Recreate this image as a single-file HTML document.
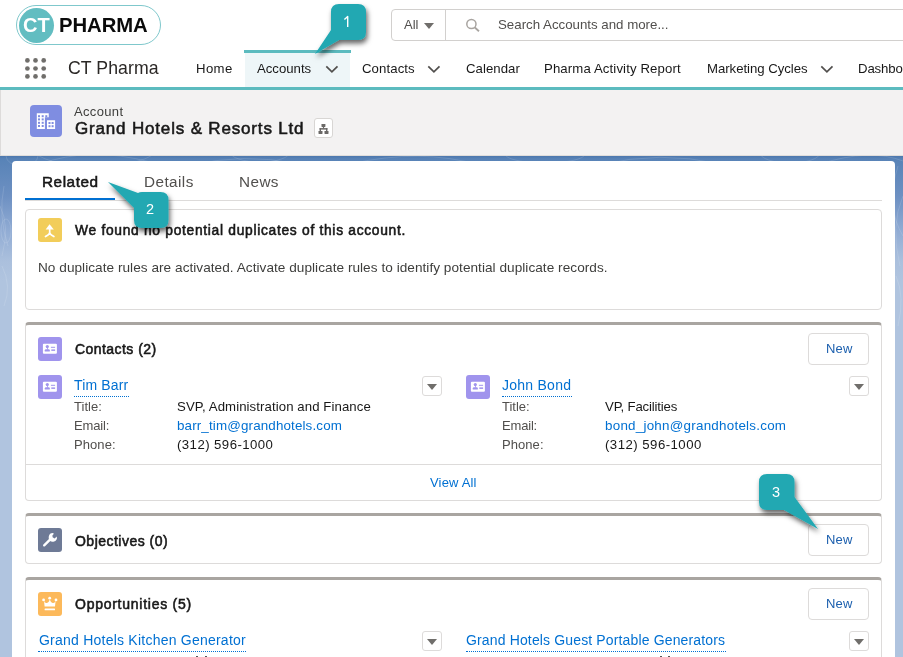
<!DOCTYPE html>
<html><head><meta charset="utf-8">
<style>
*{box-sizing:border-box;margin:0;padding:0}
html,body{width:903px;height:657px;overflow:hidden;background:#fff;font-family:"Liberation Sans",sans-serif;color:#080707}
.abs{position:absolute}
.t{position:absolute;white-space:nowrap;will-change:transform}
.box{position:absolute;background:#fff;border:1px solid #dddbda;border-radius:4px}
.sec{position:absolute;background:#fff;border:1px solid #dddbda;border-top:3px solid #a9a5a1;border-radius:4px}
.ico{position:absolute;width:24px;height:24px;border-radius:3px}
.btn{position:absolute;width:61px;height:32px;border:1px solid #dddbda;border-radius:4px;background:#fff}
.dd{position:absolute;width:20px;height:20px;border:1px solid #dddbda;border-radius:3px;background:#fff}
.dd:after{content:"";position:absolute;left:4px;top:6.5px;border-left:5px solid transparent;border-right:5px solid transparent;border-top:6.5px solid #706e6b}
.ul{position:absolute;height:0;border-bottom:1px dotted #0070d2}
</style></head>
<body>
<div class="abs" style="left:16px;top:5px;width:145px;height:40px;border:1px solid #7fc8cc;border-radius:20px;background:#fff"></div>
<div class="abs" style="left:19px;top:7.5px;width:35px;height:35px;border-radius:50%;background:#62bdc1"></div>
<div class="t" style="left:23.00px;top:15.06px;font-size:20px;line-height:20px;letter-spacing:-0.060px;color:#fff;font-weight:bold;">CT</div>
<div class="t" style="left:58.70px;top:14.81px;font-size:20.3px;line-height:20.3px;letter-spacing:-0.059px;color:#0a0a0a;font-weight:bold;">PHARMA</div>
<div class="abs" style="left:391px;top:9px;width:540px;height:32px;border:1px solid #d2d0ce;border-radius:4px;background:#fff"></div>
<div class="abs" style="left:445px;top:10px;width:1px;height:30px;background:#d2d0ce"></div>
<div class="t" style="left:403.80px;top:17.99px;font-size:13px;line-height:13px;letter-spacing:0.000px;color:#514f4d;">All</div>
<div class="abs" style="left:424px;top:23px;border-left:5px solid transparent;border-right:5px solid transparent;border-top:6px solid #706e6b"></div>
<svg class="abs" style="left:465px;top:18px" width="16" height="14" viewBox="0 0 16 14"><circle cx="6.4" cy="6" r="4.6" fill="none" stroke="#a8a4a0" stroke-width="1.5"/><line x1="9.8" y1="9.5" x2="14" y2="13.2" stroke="#a8a4a0" stroke-width="1.8"/></svg>
<div class="t" style="left:497.80px;top:17.53px;font-size:13.3px;line-height:13.3px;letter-spacing:-0.010px;color:#514f4d;">Search Accounts and more...</div>
<div class="abs" style="left:0;top:87px;width:903px;height:3px;background:#5cbbbf"></div>
<svg class="abs" style="left:24px;top:50px" width="26" height="37" viewBox="0 0 26 37"><g fill="#706e6b"><circle cx="3.4" cy="10.4" r="2.35"/><circle cx="11.5" cy="10.4" r="2.35"/><circle cx="19.7" cy="10.4" r="2.35"/><circle cx="3.4" cy="18.5" r="2.35"/><circle cx="11.5" cy="18.5" r="2.35"/><circle cx="19.7" cy="18.5" r="2.35"/><circle cx="3.4" cy="26.4" r="2.35"/><circle cx="11.5" cy="26.4" r="2.35"/><circle cx="19.7" cy="26.4" r="2.35"/></g></svg>
<div class="t" style="left:68.00px;top:60.11px;font-size:17.7px;line-height:17.7px;letter-spacing:0.052px;color:#2b2826;">CT Pharma</div>
<div class="abs" style="left:244px;top:50px;width:107px;height:3px;background:#5cbbbf"></div><div class="abs" style="left:245px;top:53px;width:105px;height:34px;background:#eef6f8"></div>
<div class="t" style="left:196.00px;top:61.72px;font-size:13.2px;line-height:13.2px;letter-spacing:0.361px;color:#181818;">Home</div>
<div class="t" style="left:257.40px;top:61.72px;font-size:13.2px;line-height:13.2px;letter-spacing:-0.013px;color:#181818;">Accounts</div>
<div class="t" style="left:362.40px;top:61.72px;font-size:13.2px;line-height:13.2px;letter-spacing:0.088px;color:#181818;">Contacts</div>
<div class="t" style="left:465.70px;top:61.72px;font-size:13.2px;line-height:13.2px;letter-spacing:0.048px;color:#181818;">Calendar</div>
<div class="t" style="left:544.40px;top:61.72px;font-size:13.2px;line-height:13.2px;letter-spacing:0.117px;color:#181818;">Pharma Activity Report</div>
<div class="t" style="left:706.80px;top:61.72px;font-size:13.2px;line-height:13.2px;letter-spacing:-0.035px;color:#181818;">Marketing Cycles</div>
<div class="t" style="left:858.20px;top:61.72px;font-size:13.2px;line-height:13.2px;letter-spacing:-0.130px;color:#181818;">Dashboards</div>
<svg class="abs" style="left:324.5px;top:65px" width="14" height="9" viewBox="0 0 14 9"><polyline points="1.3,1.3 6.9,6.9 12.5,1.3" fill="none" stroke="#514f4d" stroke-width="1.7"/></svg>
<svg class="abs" style="left:427px;top:65px" width="14" height="9" viewBox="0 0 14 9"><polyline points="1.3,1.3 6.9,6.9 12.5,1.3" fill="none" stroke="#514f4d" stroke-width="1.7"/></svg>
<svg class="abs" style="left:820px;top:65px" width="14" height="9" viewBox="0 0 14 9"><polyline points="1.3,1.3 6.9,6.9 12.5,1.3" fill="none" stroke="#514f4d" stroke-width="1.7"/></svg>
<div class="abs" style="left:0;top:90px;width:903px;height:66px;background:#f3f2f2;border-bottom:1px solid #e0dedc"></div>
<div class="abs" style="left:0;top:90px;width:1px;height:66px;background:#dddbda"></div>
<div class="abs" style="left:30px;top:105px;width:32px;height:32px;border-radius:4px;background:#7f8de1"><svg width="32" height="32" viewBox="0 0 32 32"><path d="M6.8 8.3 H18.75 V12.2 H14.9 V23.9 H6.8 Z M17 15.3 H25.1 V23.9 H17 Z" fill="#fff"/><g fill="#7f8de1"><rect x="8.0" y="10.2" width="2" height="2"/><rect x="11.7" y="10.2" width="2" height="2"/><rect x="15.3" y="10.2" width="2" height="2"/><rect x="8.0" y="13.4" width="2" height="2"/><rect x="11.7" y="13.4" width="2" height="2"/><rect x="8.0" y="16.8" width="2" height="2"/><rect x="11.7" y="16.8" width="2" height="2"/><rect x="8.0" y="20.0" width="2" height="2"/><rect x="11.7" y="20.0" width="2" height="2"/><rect x="18.5" y="17.0" width="2" height="2"/><rect x="21.6" y="17.0" width="2" height="2"/><rect x="18.5" y="20.2" width="2" height="2"/><rect x="21.6" y="20.2" width="2" height="2"/></g></svg></div>
<div class="t" style="left:74.30px;top:104.79px;font-size:13px;line-height:13px;letter-spacing:0.338px;color:#3e3e3c;">Account</div>
<div class="t" style="left:74.68px;top:119.90px;font-size:17px;line-height:17px;letter-spacing:0.827px;color:#181818;-webkit-text-stroke:0.55px #181818;">Grand Hotels &amp; Resorts Ltd</div>
<div class="abs" style="left:313.5px;top:118px;width:19.5px;height:20px;border:1px solid #d8d6d4;border-radius:3px;background:#fff"><svg class="abs" style="left:-1px;top:-1px" width="20" height="20" viewBox="0 0 20 20"><g fill="#6b6967"><rect x="7.5" y="6.1" width="3.9" height="2.9" rx="0.4"/><rect x="4.5" y="13" width="4" height="3" rx="0.4"/><rect x="10.5" y="13" width="4" height="3" rx="0.4"/><rect x="5.6" y="10.1" width="7.8" height="1.5"/><rect x="8.9" y="8.5" width="1.2" height="2"/><rect x="5.6" y="10.1" width="1.4" height="3.2"/><rect x="12" y="10.1" width="1.4" height="3.2"/></g></svg></div>
<div class="abs" style="left:0;top:156px;width:903px;height:501px;background:linear-gradient(180deg,#4d78ae 0px,#5883b7 3px,#6d90c2 40px,#91acd4 75px,#abc0dd 105px,#b0c4df 125px,#b0c4df 501px)"></div>
<svg class="abs" style="left:0;top:156px" width="903" height="200" viewBox="0 0 903 200"><g fill="none" stroke="#fff" stroke-opacity="0.16" stroke-width="0.8"><ellipse cx="22" cy="0" rx="16" ry="10"/><ellipse cx="95" cy="-6" rx="60" ry="16"/><path d="M40 8 Q90 -10 150 6"/><path d="M190 10 Q240 -4 300 8"/><ellipse cx="260" cy="-4" rx="30" ry="10"/><path d="M350 8 Q420 -8 480 9"/><ellipse cx="545" cy="-2" rx="40" ry="9"/><path d="M600 9 Q660 -6 720 8"/><ellipse cx="790" cy="-3" rx="30" ry="10"/><path d="M820 8 Q870 -8 903 5"/><path d="M4 30 Q-2 60 8 90"/><path d="M2 110 Q12 130 4 150"/><ellipse cx="6" cy="75" rx="5" ry="12"/><path d="M0 50 Q10 70 2 100"/><path d="M898 10 Q885 50 903 80"/><path d="M903 40 Q890 70 900 110"/><path d="M896 120 Q905 140 898 170"/></g></svg>
<div class="abs" style="left:12px;top:161px;width:883px;height:520px;background:#fff;border-radius:4px"></div>
<div class="t" style="left:42.07px;top:174.04px;font-size:15.3px;line-height:15.3px;letter-spacing:0.552px;color:#181818;-webkit-text-stroke:0.55px #181818;">Related</div>
<div class="t" style="left:144.20px;top:174.24px;font-size:15.3px;line-height:15.3px;letter-spacing:0.421px;color:#514f4d;">Details</div>
<div class="t" style="left:238.50px;top:174.24px;font-size:15.3px;line-height:15.3px;letter-spacing:0.412px;color:#514f4d;">News</div>
<div class="abs" style="left:25px;top:200px;width:857px;height:1px;background:#dddbda"></div>
<div class="abs" style="left:25px;top:198px;width:90px;height:2px;background:#0070d2"></div>
<div class="box" style="left:25px;top:209px;width:857px;height:101px"></div>
<div class="ico" style="left:38px;top:218px;background:#f2cd5a"><svg width="24" height="24" viewBox="0 0 24 24"><path d="M11.6 6.2 L7.6 11.6 L15.8 11.6 Z" fill="#fff"/><path d="M11.7 11 V14.6 Q11.7 16 10 17 L7.5 18.5 M11.7 14.6 Q11.7 16 13.4 17 L15.9 18.5" stroke="#fff" stroke-width="1.7" fill="none" stroke-linecap="round" stroke-linejoin="round"/></svg></div>
<div class="t" style="left:74.98px;top:223.81px;font-size:13.8px;line-height:13.8px;letter-spacing:0.704px;color:#181818;-webkit-text-stroke:0.55px #181818;">We found no potential duplicates of this account.</div>
<div class="t" style="left:38.00px;top:261.28px;font-size:13.6px;line-height:13.6px;letter-spacing:0.044px;color:#3e3e3c;">No duplicate rules are activated. Activate duplicate rules to identify potential duplicate records.</div>
<div class="sec" style="left:25px;top:322px;width:857px;height:179px"></div>
<div class="ico" style="left:38px;top:337px;background:#a094ed"><svg width="24" height="24" viewBox="0 0 24 24"><rect x="4.9" y="6.8" width="14" height="10" rx="1" fill="#fff"/><circle cx="9.3" cy="9.6" r="1.6" fill="#a094ed"/><path d="M6.8 14.6 L6.8 13.3 Q6.8 12.4 8 12.2 L10.6 12.2 Q11.8 12.4 11.8 13.3 L11.8 14.6 Z" fill="#a094ed"/><rect x="9" y="10.4" width="0.8" height="2.2" fill="#a094ed"/><rect x="12.9" y="9.8" width="4.2" height="1" fill="#a094ed"/><rect x="13.3" y="12.4" width="3.8" height="1.5" fill="#a094ed"/></svg></div>
<div class="t" style="left:74.68px;top:341.94px;font-size:14px;line-height:14px;letter-spacing:0.446px;color:#181818;-webkit-text-stroke:0.55px #181818;">Contacts (2)</div>
<div class="btn" style="left:808px;top:333px"></div>
<div class="t" style="left:825.60px;top:341.79px;font-size:13px;line-height:13px;letter-spacing:0.230px;color:#1b5fae;">New</div>
<div class="ico" style="left:38px;top:375px;background:#a094ed"><svg width="24" height="24" viewBox="0 0 24 24"><rect x="4.9" y="6.8" width="14" height="10" rx="1" fill="#fff"/><circle cx="9.3" cy="9.6" r="1.6" fill="#a094ed"/><path d="M6.8 14.6 L6.8 13.3 Q6.8 12.4 8 12.2 L10.6 12.2 Q11.8 12.4 11.8 13.3 L11.8 14.6 Z" fill="#a094ed"/><rect x="9" y="10.4" width="0.8" height="2.2" fill="#a094ed"/><rect x="12.9" y="9.8" width="4.2" height="1" fill="#a094ed"/><rect x="13.3" y="12.4" width="3.8" height="1.5" fill="#a094ed"/></svg></div>
<div class="t" style="left:74.40px;top:378.44px;font-size:14px;line-height:14px;letter-spacing:0.151px;color:#0070d2;">Tim Barr</div>
<div class="ul" style="left:74px;top:396px;width:55px"></div>
<div class="dd" style="left:422px;top:376px"></div>
<div class="t" style="left:74.20px;top:399.99px;font-size:13px;line-height:13px;letter-spacing:0.022px;color:#514f4d;">Title:</div>
<div class="t" style="left:177.00px;top:399.82px;font-size:13.2px;line-height:13.2px;letter-spacing:0.091px;color:#181818;">SVP, Administration and Finance</div>
<div class="t" style="left:74.20px;top:418.99px;font-size:13px;line-height:13px;letter-spacing:-0.163px;color:#514f4d;">Email:</div>
<div class="t" style="left:177.00px;top:418.65px;font-size:13.4px;line-height:13.4px;letter-spacing:0.138px;color:#0070d2;">barr_tim@grandhotels.com</div>
<div class="t" style="left:74.20px;top:437.89px;font-size:13px;line-height:13px;letter-spacing:0.081px;color:#514f4d;">Phone:</div>
<div class="t" style="left:177.00px;top:437.72px;font-size:13.2px;line-height:13.2px;letter-spacing:0.441px;color:#181818;">(312) 596-1000</div>
<div class="ico" style="left:466px;top:375px;background:#a094ed"><svg width="24" height="24" viewBox="0 0 24 24"><rect x="4.9" y="6.8" width="14" height="10" rx="1" fill="#fff"/><circle cx="9.3" cy="9.6" r="1.6" fill="#a094ed"/><path d="M6.8 14.6 L6.8 13.3 Q6.8 12.4 8 12.2 L10.6 12.2 Q11.8 12.4 11.8 13.3 L11.8 14.6 Z" fill="#a094ed"/><rect x="9" y="10.4" width="0.8" height="2.2" fill="#a094ed"/><rect x="12.9" y="9.8" width="4.2" height="1" fill="#a094ed"/><rect x="13.3" y="12.4" width="3.8" height="1.5" fill="#a094ed"/></svg></div>
<div class="t" style="left:502.00px;top:378.44px;font-size:14px;line-height:14px;letter-spacing:0.256px;color:#0070d2;">John Bond</div>
<div class="ul" style="left:502px;top:396px;width:70px"></div>
<div class="dd" style="left:849px;top:376px"></div>
<div class="t" style="left:502.30px;top:399.99px;font-size:13px;line-height:13px;letter-spacing:-0.018px;color:#514f4d;">Title:</div>
<div class="t" style="left:604.60px;top:399.82px;font-size:13.2px;line-height:13.2px;letter-spacing:-0.168px;color:#181818;">VP, Facilities</div>
<div class="t" style="left:502.30px;top:418.99px;font-size:13px;line-height:13px;letter-spacing:-0.183px;color:#514f4d;">Email:</div>
<div class="t" style="left:604.60px;top:418.65px;font-size:13.4px;line-height:13.4px;letter-spacing:0.243px;color:#0070d2;">bond_john@grandhotels.com</div>
<div class="t" style="left:502.30px;top:437.89px;font-size:13px;line-height:13px;letter-spacing:0.061px;color:#514f4d;">Phone:</div>
<div class="t" style="left:604.60px;top:437.72px;font-size:13.2px;line-height:13.2px;letter-spacing:0.472px;color:#181818;">(312) 596-1000</div>
<div class="abs" style="left:26px;top:464px;width:855px;height:1px;background:#dddbda"></div>
<div class="t" style="left:429.90px;top:475.79px;font-size:13px;line-height:13px;letter-spacing:0.174px;color:#0070d2;">View All</div>
<div class="sec" style="left:25px;top:513px;width:857px;height:51px"></div>
<div class="ico" style="left:38px;top:528px;background:#6e7a96"><svg width="24" height="24" viewBox="0 0 24 24"><path d="M6.2 17.3 L12.5 11.2" stroke="#fff" stroke-width="2.4" stroke-linecap="round"/><path d="M15.3 5 A4.3 4.3 0 1 0 18.9 11.1 L18.8 8.6 L16.6 10.6 L14.6 9.2 L14.4 7.4 L15.7 6 Z" fill="#fff"/><path d="M11.6 9.8 A4 4 0 0 0 14.6 13.2 L12.4 13.2 Z" fill="#fff"/></svg></div>
<div class="t" style="left:74.98px;top:533.64px;font-size:14px;line-height:14px;letter-spacing:0.477px;color:#181818;-webkit-text-stroke:0.55px #181818;">Objectives (0)</div>
<div class="btn" style="left:808px;top:524px"></div>
<div class="t" style="left:825.60px;top:532.79px;font-size:13px;line-height:13px;letter-spacing:0.230px;color:#1b5fae;">New</div>
<div class="sec" style="left:25px;top:577px;width:857px;height:300px"></div>
<div class="ico" style="left:38px;top:592px;background:#fcb95b"><svg width="24" height="24" viewBox="0 0 24 24"><g fill="#fff"><circle cx="5.6" cy="7.9" r="1.4"/><circle cx="11.7" cy="6.2" r="1.4"/><circle cx="18" cy="7.9" r="1.4"/><path d="M6 8.8 L6.6 14.6 L17 14.6 L17.6 8.8 Q16.8 11.6 14.6 11 Q12.6 10.2 11.8 7.4 Q11 10.2 9 11 Q6.8 11.6 6 8.8 Z"/><rect x="6.6" y="16.6" width="10.4" height="1.6" rx="0.5"/></g></svg></div>
<div class="t" style="left:74.98px;top:597.34px;font-size:14px;line-height:14px;letter-spacing:0.742px;color:#181818;-webkit-text-stroke:0.55px #181818;">Opportunities (5)</div>
<div class="btn" style="left:808px;top:588px"></div>
<div class="t" style="left:825.60px;top:596.79px;font-size:13px;line-height:13px;letter-spacing:0.230px;color:#1b5fae;">New</div>
<div class="t" style="left:38.50px;top:633.14px;font-size:14px;line-height:14px;letter-spacing:0.231px;color:#0070d2;">Grand Hotels Kitchen Generator</div>
<div class="ul" style="left:38px;top:651px;width:208px"></div>
<div class="dd" style="left:422px;top:631px"></div>
<div class="t" style="left:466.00px;top:633.14px;font-size:14px;line-height:14px;letter-spacing:0.144px;color:#0070d2;">Grand Hotels Guest Portable Generators</div>
<div class="ul" style="left:466px;top:651px;width:260px"></div>
<div class="dd" style="left:849px;top:631px"></div>
<div class="abs" style="left:196px;top:655.5px;width:1.5px;height:2px;background:#555"></div>
<div class="abs" style="left:205px;top:655.5px;width:1.5px;height:2px;background:#555"></div>
<div class="abs" style="left:660px;top:655.5px;width:1.5px;height:2px;background:#555"></div>
<div class="abs" style="left:668px;top:655.5px;width:1.5px;height:2px;background:#555"></div>
<svg class="abs" style="left:0;top:0" width="903" height="657" viewBox="0 0 903 657">
<defs><filter id="sh" x="-50%" y="-50%" width="200%" height="200%"><feDropShadow dx="1.5" dy="3.5" stdDeviation="2.8" flood-color="#000" flood-opacity="0.6"/></filter></defs>
<g fill="#21a8b2" filter="url(#sh)">
<path d="M339 4 H358 Q366 4 366 12 V32 Q366 40 358 40 H339 L315 54 L331 30 V12 Q331 4 339 4 Z"/>
<path d="M142 192 H160.5 Q168.5 192 168.5 200 V220 Q168.5 228 160.5 228 H142 Q134 228 134 220 V208 L108 182 L138 193 Q139.5 192 142 192 Z"/>
<path d="M767 474 H786.5 Q794.5 474 794.5 482 V497 L818 529 L784 510 H767 Q759 510 759 502 V482 Q759 474 767 474 Z"/>
</g></svg>
<svg class="abs" style="left:0;top:0" width="903" height="60"><path d="M344.4 19.6 L347.7 16.4 V26.9" stroke="#fff" stroke-width="1.4" fill="none" stroke-linejoin="round"/></svg>
<div class="t" style="left:146.00px;top:202.42px;font-size:14.5px;line-height:14.5px;letter-spacing:0.000px;color:#fff;">2</div>
<div class="t" style="left:772.00px;top:484.72px;font-size:14.5px;line-height:14.5px;letter-spacing:0.000px;color:#fff;">3</div>
</body></html>
